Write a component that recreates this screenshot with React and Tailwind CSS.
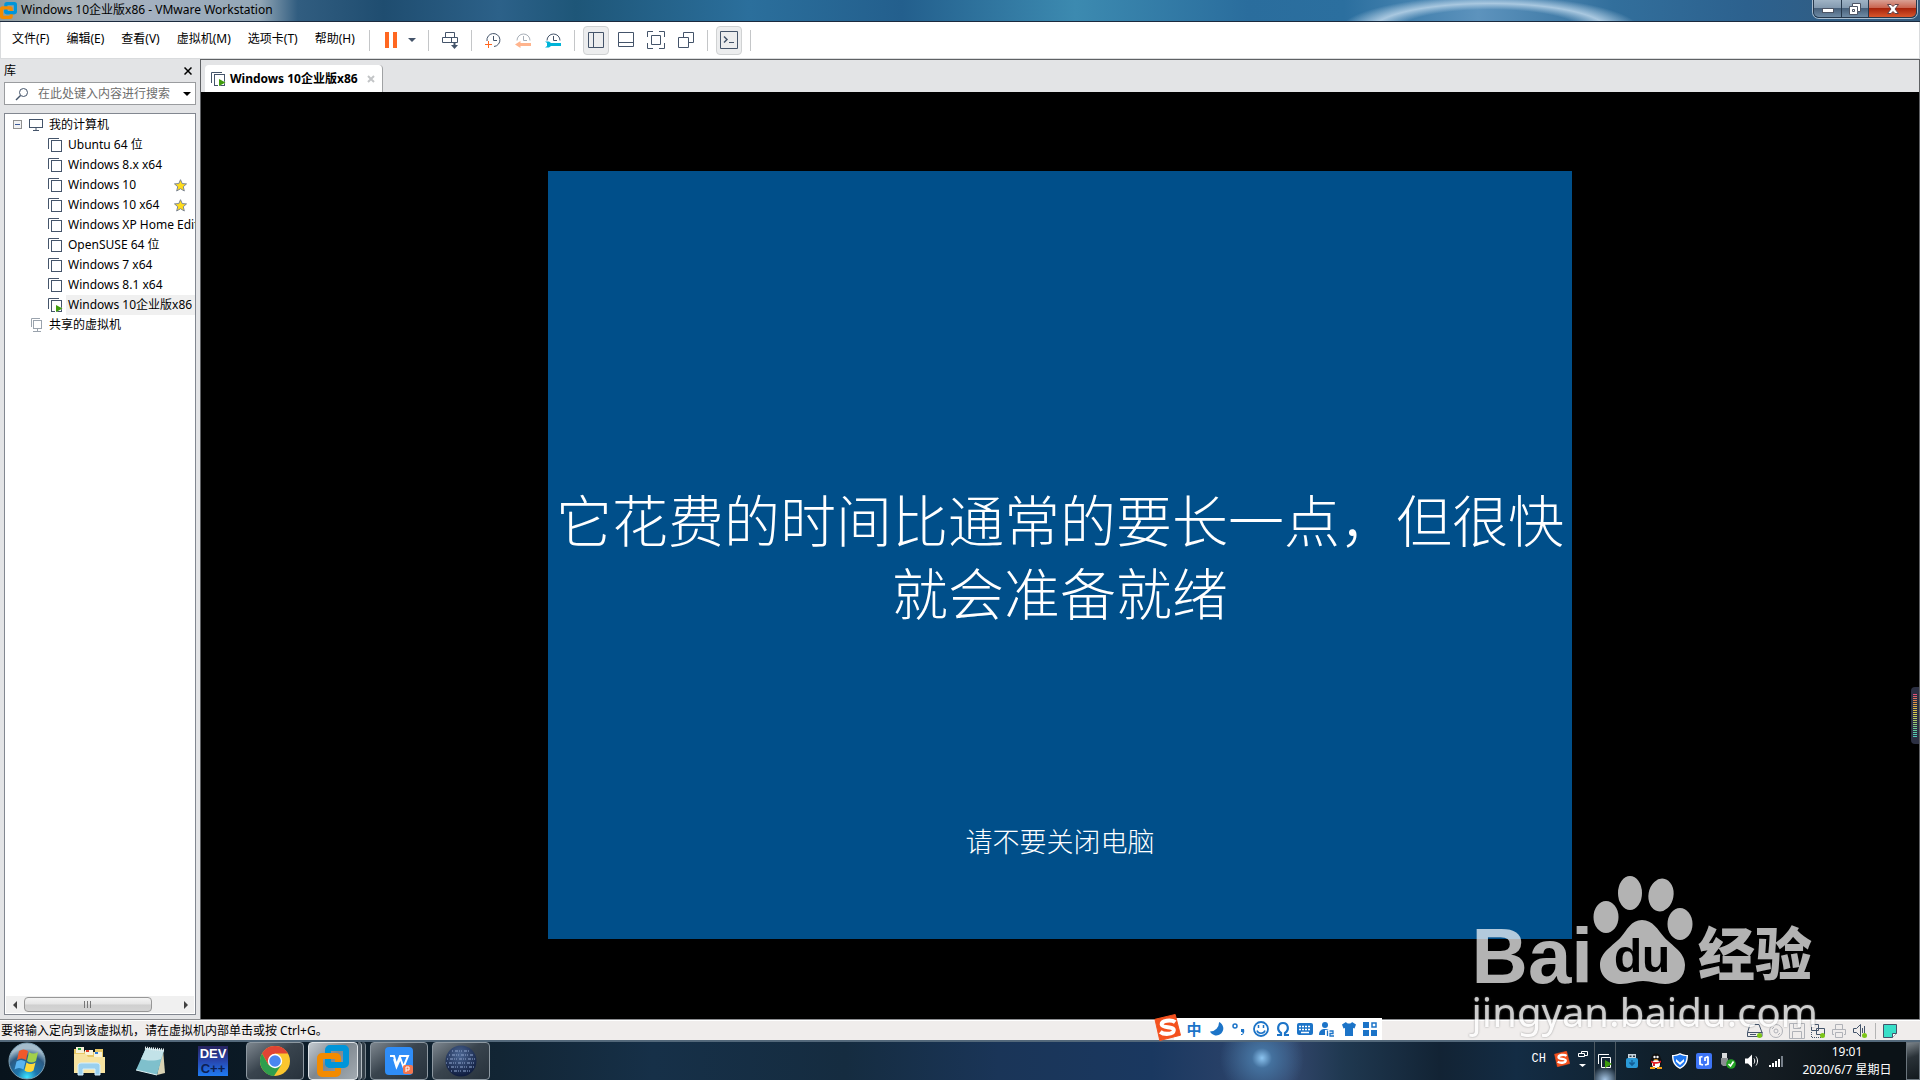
import React from "react";

const INK = "#44546a";

function Svg({ w = 16, h = 16, box, className = "", children }) {
  return (
    <svg
      width={w}
      height={h}
      viewBox={box || `0 0 ${w} ${h}`}
      className={`shrink-0 ${className}`}
      fill="none"
      aria-hidden="true"
    >
      {children}
    </svg>
  );
}

/* ---------- VMware icons ---------- */

function VmwareLogo({ size = 16 }) {
  return (
    <Svg w={size} h={size} box="0 0 32 32">
      <rect x="11" y="3" width="18" height="17" rx="2" stroke="#0095d9" strokeWidth="6" />
      <rect x="3" y="11" width="18" height="18" rx="2" stroke="#f38b00" strokeWidth="6" />
      <path d="M11 15v3a2 2 0 0 0 2 2h14" stroke="#0095d9" strokeWidth="6" />
    </Svg>
  );
}

function VmIcon({ running, color = INK }) {
  return (
    <Svg w={15} h={14}>
      <path d="M.5 11V.5H11" stroke={color} />
      <rect x="3.5" y="2.5" width="10" height="11" stroke={color} />
      {running && <path d="M7 6.500l8 4-8 4z" fill="#fff" />}
      {running && <path d="M8 7v7l6.500-3.500z" fill="#3f9c0c" />}
    </Svg>
  );
}

function MonitorIcon() {
  return (
    <Svg w={14} h={12}>
      <rect x=".5" y=".5" width="13" height="8" stroke={INK} />
      <path d="M7 9v2M4 11.500h6" stroke={INK} />
    </Svg>
  );
}

function SharedIcon() {
  return (
    <Svg w={12} h={14}>
      <path d="M.5 9V.5H9" stroke="#9aa3ad" />
      <rect x="2.500" y="2.500" width="8" height="8" stroke="#9aa3ad" />
      <path d="M6.500 11v2M2 13.500h8" stroke="#9aa3ad" />
    </Svg>
  );
}

function StarIcon() {
  return (
    <Svg w={13} h={13}>
      <path
        d="M6.500 .7l1.700 3.900 4.300.3-3.200 2.800 1 4.300-3.800-2.300L2.700 12l1-4.300L.5 4.900l4.300-.3z"
        fill="#ffdc1c"
        stroke="#7b8494"
      />
    </Svg>
  );
}

function PauseIcon() {
  return (
    <Svg w={12} h={16}>
      <path d="M0 0h4v16H0zM8 0h4v16H8z" fill="#ff6720" />
    </Svg>
  );
}

function SendKeysIcon() {
  return (
    <Svg w={16} h={17}>
      <path d="M3.500 5.500v-5h9v5M.5 5.500h15v5H.5zM9.500 5.500v5" stroke={INK} />
      <path d="M12.500 10v4" stroke={INK} strokeWidth="2" />
      <path d="M9 13h7l-3.500 4z" fill={INK} />
    </Svg>
  );
}

function ClockPlusIcon() {
  return (
    <Svg>
      <path d="M2 9A6.500 6.500 0 1 1 9 14.500" stroke={INK} />
      <path d="M8.500 4v4.500H12" stroke={INK} />
      <path d="M3.500 9v7M0 12.500h7" stroke="#ff6720" />
    </Svg>
  );
}

function ClockBackIcon() {
  return (
    <Svg>
      <path d="M2 8.500a6.500 6.500 0 1 1 13 0" stroke="#a8afb8" />
      <path d="M8.500 4v4.500H12" stroke="#a8afb8" />
      <path d="M0 12.500L5.500 9v2H16v3H5.500v2z" fill="#ffb48d" />
    </Svg>
  );
}

function ClockWrenchIcon() {
  return (
    <Svg>
      <path d="M2 8.500a6.500 6.500 0 1 1 13 0" stroke={INK} />
      <path d="M8.500 4v4.500H12" stroke={INK} />
      <path d="M0 9.500h4l2 1.500h10v3H6l-2 1.500H0L2 14v-3z" fill="#00b4d8" />
    </Svg>
  );
}

function LibraryIcon() {
  return (
    <Svg>
      <path d="M.5.5h15v15H.5zM5.500.5v15" stroke={INK} />
    </Svg>
  );
}

function ThumbBarIcon() {
  return (
    <Svg>
      <path d="M.5.5h15v14H.5zM.5 10.500h15" stroke={INK} />
    </Svg>
  );
}

function FullScreenIcon() {
  return (
    <Svg w={18} h={18}>
      <path d="M.5 6V.5H6M12 .5h5.500V6M17.500 12v5.500H12M6 17.500H.5V12M4.500 4.500h9v9h-9z" stroke={INK} />
    </Svg>
  );
}

function UnityIcon() {
  return (
    <Svg>
      <path d="M5.500 5V.5h10v10H11M.5 5.500h10v10H.5z" stroke={INK} />
    </Svg>
  );
}

function ConsoleIcon() {
  return (
    <Svg w={18} h={18}>
      <path d="M.5.5h17v17H.5z" stroke={INK} />
      <path d="M4 5.500l3 3-3 3" stroke={INK} strokeWidth="1.500" />
      <path d="M9 11.500h5" stroke={INK} />
    </Svg>
  );
}

/* ---------- Title bar ---------- */

function TitleBar() {
  return (
    <header className="flex h-[22px] shrink-0 justify-between overflow-hidden border-b border-[#1b2a3e] bg-[radial-gradient(ellipse_150px_34px_at_1490px_30px,transparent_60%,#a9c8e0_78%,transparent_100%),linear-gradient(90deg,#8e9a9e_0%,#a9b3b9_3%,#a3b0c0_8%,#93a7b6_13.500%,#315d80_15.500%,#1f4d70_20%,#2c6189_26%,#1e5678_30%,#2b6f9c_39%,#235f8d_47%,#3c8ab0_56%,#2a6d9d_65%,#2b6f9f_70%,#5d93bd_77%,#326f9c_84%,#2c618e_91%,#345a7c_100%)]">
      <h1 className="flex h-[20px] items-center gap-1 text-xs font-normal text-black">
        <VmwareLogo size={17} />
        <span>Windows 10企业版x86 - VMware Workstation</span>
      </h1>
      <div className="mr-[3px] flex h-[18px] overflow-hidden rounded-b-md border border-t-0 border-[#26384c] shadow-[0_0_0_1px_#a9bdcf]">
        <button
          aria-label="最小化"
          className="flex w-7 items-center justify-center border-r border-[#26384c] bg-[linear-gradient(#9fb3c5_0%,#8298ae_48%,#48617b_50%,#6f8ba5_100%)]"
        >
          <Svg w={12} h={5} className="mt-1">
            <rect x=".5" y=".5" width="11" height="4" fill="#fff" stroke="#4d5565" />
          </Svg>
        </button>
        <button
          aria-label="还原"
          className="flex w-[27px] items-center justify-center border-r border-[#26384c] bg-[linear-gradient(#9fb3c5_0%,#8298ae_48%,#48617b_50%,#6f8ba5_100%)]"
        >
          <Svg w={12} h={12}>
            <path d="M3.500.5h8v8h-3v3h-8v-8h3z" fill="#fff" stroke="#4d5565" />
            <path d="M3.500 3.500h5v5M3.500 6.500h2v2h-2z" stroke="#4d5565" />
          </Svg>
        </button>
        <button
          aria-label="关闭"
          className="flex w-[47px] items-center justify-center bg-[linear-gradient(#d9a094_0%,#c9614c_48%,#a8240c_50%,#d8562c_100%)]"
        >
          <Svg w={12} h={10}>
            <path d="M.5.5h3.500l2 2 2-2h3.500L8 5l3.500 4.500H8l-2-2-2 2H.5L4 5z" fill="#fff" stroke="#5c4048" />
          </Svg>
        </button>
      </div>
    </header>
  );
}

/* ---------- Menu and toolbar ---------- */

const MENUS = ["文件(F)", "编辑(E)", "查看(V)", "虚拟机(M)", "选项卡(T)", "帮助(H)"];

function Separator() {
  return <span className="mx-2 h-[21px] w-px bg-[#c4c6c8]" />;
}

function ToolButton({ label, active, children }) {
  return (
    <button
      aria-label={label}
      aria-pressed={active ? "true" : undefined}
      className={
        active
          ? "flex h-[29px] w-[26px] items-center justify-center rounded border border-[#d0d2d3] bg-[#ecedee]"
          : "flex h-[29px] w-[26px] items-center justify-center"
      }
    >
      {children}
    </button>
  );
}

function MenuBar() {
  return (
    <div className="flex h-[37px] shrink-0 items-center border-x border-b border-[#d9dbdd] bg-white">
      <nav className="flex w-[360px] items-center gap-px pb-[2px] pl-[3px]">
        {MENUS.map((m) => (
          <button key={m} className="px-2 text-xs whitespace-nowrap text-black">
            {m}
          </button>
        ))}
      </nav>
      <div className="flex items-center">
        <Separator />
        <ToolButton label="挂起">
          <PauseIcon />
        </ToolButton>
        <button aria-label="电源选项" className="flex h-[29px] w-4 items-center justify-center">
          <Svg w={8} h={4}>
            <path d="M0 0h8L4 4z" fill={INK} />
          </Svg>
        </button>
        <Separator />
        <ToolButton label="发送 Ctrl+Alt+Del">
          <SendKeysIcon />
        </ToolButton>
        <Separator />
        <div className="flex gap-1">
          <ToolButton label="拍摄快照">
            <ClockPlusIcon />
          </ToolButton>
          <ToolButton label="恢复快照">
            <ClockBackIcon />
          </ToolButton>
          <ToolButton label="管理快照">
            <ClockWrenchIcon />
          </ToolButton>
        </div>
        <Separator />
        <div className="flex gap-1">
          <ToolButton label="显示库" active>
            <LibraryIcon />
          </ToolButton>
          <ToolButton label="缩略图栏">
            <ThumbBarIcon />
          </ToolButton>
          <ToolButton label="全屏">
            <FullScreenIcon />
          </ToolButton>
          <ToolButton label="Unity">
            <UnityIcon />
          </ToolButton>
        </div>
        <Separator />
        <ToolButton label="控制台视图" active>
          <ConsoleIcon />
        </ToolButton>
        <Separator />
      </div>
    </div>
  );
}

/* ---------- Library panel ---------- */

const MACHINES = [
  { name: "Ubuntu 64 位" },
  { name: "Windows 8.x x64" },
  { name: "Windows 10", star: true },
  { name: "Windows 10 x64", star: true },
  { name: "Windows XP Home Edition" },
  { name: "OpenSUSE 64 位" },
  { name: "Windows 7 x64" },
  { name: "Windows 8.1 x64" },
  { name: "Windows 10企业版x86", running: true },
];

function Library() {
  return (
    <aside className="flex w-[200px] shrink-0 flex-col bg-[#e3e4e6] pr-1 pb-1 pl-1 text-xs text-black">
      <div className="flex h-[23px] items-center justify-between">
        <h2>库</h2>
        <button aria-label="关闭库" className="flex size-4 items-center justify-center">
          <Svg w={8} h={8}>
            <path d="M.5.5l7 7M7.500.5l-7 7" stroke="#000" strokeWidth="1.500" />
          </Svg>
        </button>
      </div>
      <div className="flex h-[23px] items-center border border-[#9a9c9f] bg-white pl-[10px]">
        <Svg w={14} h={14}>
          <circle cx="8.500" cy="5.500" r="4" stroke={INK} />
          <path d="M5.500 8.500L1 13" stroke={INK} strokeWidth="1.500" />
        </Svg>
        <input
          aria-label="搜索"
          placeholder="在此处键入内容进行搜索"
          className="min-w-0 flex-1 bg-transparent pt-px pl-[9px] outline-none placeholder:text-[#6d6d6d]"
        />
        <button aria-label="搜索选项" className="flex h-full w-[17px] items-center justify-center">
          <Svg w={8} h={4}>
            <path d="M0 0h8L4 4z" fill="#000" />
          </Svg>
        </button>
      </div>
      <div className="mt-2 flex min-h-0 flex-1 flex-col border border-[#828790] bg-white">
        <ul className="min-h-0 flex-1 overflow-hidden leading-5 whitespace-nowrap">
          <li>
            <div className="flex h-[21px] items-center pl-2">
              <button
                aria-label="折叠"
                className="flex size-[9px] items-center justify-center border border-[#919191] bg-[#f2f2f2]"
              >
                <span className="h-px w-[5px] bg-[#3b5a9a]" />
              </button>
              <span className="flex items-center gap-[6px] pl-[7px]">
                <MonitorIcon />
                我的计算机
              </span>
            </div>
            <ul>
              {MACHINES.map((m) => (
                <li key={m.name} className="flex h-5 items-center overflow-hidden pl-[43px]">
                  <VmIcon running={m.running} />
                  <button
                    className={
                      m.running
                        ? "ml-[3px] flex-1 overflow-hidden bg-[#f0f0f0] pl-[2px] text-left whitespace-nowrap"
                        : "ml-[5px] flex-1 overflow-hidden text-left whitespace-nowrap"
                    }
                  >
                    {m.name}
                  </button>
                  {m.star && (
                    <span className="pr-2">
                      <StarIcon />
                    </span>
                  )}
                </li>
              ))}
            </ul>
          </li>
          <li className="flex h-5 items-center gap-[6px] pl-[26px]">
            <SharedIcon />
            共享的虚拟机
          </li>
        </ul>
        <div className="m-px flex h-[17px] items-center bg-[#f0f0f0]">
          <button aria-label="向左滚动" className="flex h-full w-[18px] items-center justify-center">
            <Svg w={4} h={8}>
              <path d="M4 0v8L0 4z" fill="#404040" />
            </Svg>
          </button>
          <div className="flex h-[15px] flex-1">
            <div className="flex w-5/6 items-center justify-center gap-px rounded-sm border border-[#979797] bg-[linear-gradient(#f4f4f4_0%,#e4e4e4_48%,#cfcfcf_52%,#d4d4d4_100%)]">
              <span className="h-[7px] w-[2px] border-l border-[#777]" />
              <span className="h-[7px] w-[2px] border-l border-[#777]" />
              <span className="h-[7px] w-[2px] border-l border-[#777]" />
            </div>
          </div>
          <button aria-label="向右滚动" className="flex h-full w-[17px] items-center justify-center">
            <Svg w={4} h={8}>
              <path d="M0 0v8l4-4z" fill="#404040" />
            </Svg>
          </button>
        </div>
      </div>
    </aside>
  );
}

/* ---------- Guest view ---------- */

function LevelMeter() {
  const colors = [
    "#e0507a", "#e0606a", "#e0705a", "#e0804e", "#e09048", "#e0a044", "#e0ac44", "#e0b844",
    "#dcc048", "#d8c84c", "#d0cc50", "#c4cc58", "#b8cc60", "#acca68", "#9cca70", "#8cca78",
    "#7cca84", "#6cca90", "#60ca9c", "#58caa8", "#54cab0", "#50cab8",
  ];
  return (
    <div className="absolute top-[628px] right-0 flex w-[8px] flex-col items-center gap-px rounded-l bg-[#2b2f42] py-[7px]">
      {colors.map((c) => (
        <span key={c} className="h-px w-1" style={{ backgroundColor: c }} />
      ))}
    </div>
  );
}

function Workspace() {
  return (
    <main className="relative flex min-w-0 flex-1 flex-col border-r border-l border-[#5f6164] bg-black">
      <div className="flex h-[33px] shrink-0 items-end border-t border-[#5f6164] bg-[#e3e4e6] pl-1">
        <div className="flex h-[27px] items-center rounded-t border-r border-[#a0a2a4] bg-white pr-[7px] pl-[6px] text-xs font-bold text-black">
          <VmIcon running />
          <span className="pl-1">Windows 10企业版x86</span>
          <button aria-label="关闭选项卡" className="ml-[9px] flex size-2 items-center justify-center">
            <Svg w={8} h={8}>
              <path d="M1 1l6 6M7 1L1 7" stroke="#c3c5c7" strokeWidth="2" />
            </Svg>
          </button>
        </div>
      </div>
      <div className="flex min-h-0 flex-1 items-center justify-center pb-[2px]">
        <section className="flex h-[768px] w-[1024px] flex-col items-center bg-[#004f8a] text-white">
          <p className="mt-[313px] px-2 text-center text-[56px] leading-[73px] font-light">
            它花费的时间比通常的要长一点，但很快就会准备就绪
          </p>
          <p className="mt-[194px] text-[27px] leading-9 font-light">请不要关闭电脑</p>
        </section>
      </div>
      <LevelMeter />
    </main>
  );
}

/* ---------- Status bar ---------- */

function Dot({ x, y }) {
  return <circle cx={x} cy={y} r="2.500" fill="#7cc518" />;
}

function StatusBar() {
  return (
    <footer className="flex h-5 shrink-0 items-center justify-between border-t border-white bg-[#f0edec] pr-[23px] text-xs text-black">
      <span className="pt-px pl-px">要将输入定向到该虚拟机，请在虚拟机内部单击或按 Ctrl+G。</span>
      <div className="flex items-center gap-[5px]">
        <Svg>
          <path d="M3 1.500h9l3 8v4H.5v-4zM.5 9.500h15M3 11.500h6" stroke={INK} />
          <Dot x={12.5} y={12.5} />
        </Svg>
        <Svg>
          <circle cx="8" cy="8" r="6.500" stroke="#b0b2b8" />
          <circle cx="8" cy="8" r="2" stroke="#b0b2b8" />
          <path d="M4 6l2-2M10 12l2-2" stroke="#b0b2b8" />
        </Svg>
        <Svg>
          <path d="M.5.5h15v15H.5zM4.500.5v5h7v-5M3.500 15V8.500h9V15" stroke="#b0b2b8" />
        </Svg>
        <Svg>
          <path d="M1.500 1.500h7v6h-7zM6.500 5.500h8v6h-8z" fill="#f0edec" stroke={INK} />
          <path d="M1.500 9v5.500H11" stroke={INK} strokeDasharray="1 1" />
          <Dot x={12.5} y={12.5} />
        </Svg>
        <Svg>
          <path d="M4.500 6V1.500h7V6M3 11.500H1.500v-5h13v5H13M4.500 9.500h7v5h-7z" stroke="#b0b2b8" />
        </Svg>
        <Svg>
          <path d="M1.500 5.500h3l4-4v12l-4-4h-3zM10.500 5v5M12.500 3v7" stroke={INK} />
          <Dot x={12.5} y={12.5} />
        </Svg>
        <span className="mx-[2px] h-4 w-px bg-[#b4b4b4]" />
        <Svg w={14} h={14}>
          <path d="M.5.5h13v9l-4 4h-9z" fill="#38dfc8" stroke={INK} />
          <path d="M9.500 13.500v-4h4" fill="#fff" stroke={INK} />
        </Svg>
      </div>
    </footer>
  );
}

/* ---------- Input method bar ---------- */

function SogouMark({ size }) {
  return (
    <Svg w={size} h={size} box="0 0 28 28">
      <path d="M1 5.500L22 .5 27.500 22 6 27.500z" fill="#f4511e" stroke="#f4511e" strokeLinejoin="round" />
      <path
        d="M22 8.500C18 5.500 7.500 6.500 8 11c.5 4 13 1.500 12.500 6C20 21.500 10 21.500 6.500 18.500"
        stroke="#fff"
        strokeWidth="4.200"
      />
    </Svg>
  );
}

function InputBar() {
  const blue = "#1c74c8";
  return (
    <div className="absolute right-[538px] bottom-10 flex h-[22px] items-center gap-[6px] bg-white pr-[5px]">
      <div className="-mt-1 -mr-[2px] -ml-5">
        <SogouMark size={27} />
      </div>
      <button className="w-[18px] text-[15px] leading-5 font-bold text-[#1c74c8]">中</button>
      <Svg>
        <path d="M10 1a7 7 0 1 1-9 9.500A9 9 0 0 0 10 1z" fill={blue} />
      </Svg>
      <Svg>
        <circle cx="4" cy="5" r="2" stroke={blue} strokeWidth="1.500" />
        <path d="M10 13c3 0 2-2 0-2V8h3c1 4-1 6-3 6z" fill={blue} />
      </Svg>
      <Svg>
        <circle cx="8" cy="8" r="7" stroke={blue} strokeWidth="1.800" />
        <path d="M5.500 4v3M10.500 4v3M4 9.500c1 3.500 7 3.500 8 0" stroke={blue} strokeWidth="1.500" />
      </Svg>
      <Svg>
        <path d="M2 14h4v-2C1.500 9 2.500 2 8 2s6.500 7 2 10v2h4" stroke={blue} strokeWidth="2.200" />
      </Svg>
      <Svg>
        <rect y="2" width="16" height="12" rx="2" fill={blue} />
        <path d="M2 5.500h12M2 8.500h12" stroke="#fff" strokeWidth="1.500" strokeDasharray="2 1" />
        <path d="M4 11.500h8" stroke="#fff" strokeWidth="1.500" />
      </Svg>
      <Svg>
        <circle cx="6" cy="4" r="3" fill={blue} />
        <path d="M0 14c0-5 3-6 6-6s5 1 6 4v2z" fill={blue} />
        <rect x="6" y="9" width="10" height="7" fill="#fff" />
        <path d="M8.500 9.500V15M10.500 10H14v2.500h-3v2.500h4" stroke={blue} strokeWidth="1.300" />
      </Svg>
      <Svg>
        <path d="M5 1c1 2 5 2 6 0l4 2.500-1.500 4-1.500-.5v8H4V7l-1.500.5L1 3.500z" fill={blue} />
      </Svg>
      <Svg w={14} h={14}>
        <path d="M0 0h6v6H0zM0 8h6v6H0zM8 8h6v6H8z" fill={blue} />
        <rect x="9" y="1" width="4" height="4" stroke={blue} strokeWidth="1.500" />
      </Svg>
    </div>
  );
}

/* ---------- Taskbar ---------- */

function StartOrb() {
  return (
    <Svg w={38} h={38}>
      <defs>
        <radialGradient id="orb" cx="50%" cy="95%" r="80%">
          <stop offset="0" stopColor="#3ee6ff" />
          <stop offset=".35" stopColor="#1d76ae" />
          <stop offset=".75" stopColor="#2c5a82" />
          <stop offset="1" stopColor="#a4bccc" />
        </radialGradient>
      </defs>
      <circle cx="19" cy="19" r="18" fill="url(#orb)" stroke="#7da0b4" />
      <path d="M11 9c3-2 6-2 9 0l-2 9c-3-2-6-2-9 0z" fill="#f0592a" />
      <path d="M21 10c3 2 6 2 9 0l-2 9c-3 2-6 2-9 0z" fill="#a2d04a" />
      <path d="M8.500 19.500c3-2 6-2 9 0l-2 8c-3-2-6-2-9 0z" fill="#5ab4f0" />
      <path d="M18.500 20.500c3 2 6 2 9 0l-2 8c-3 2-6 2-9 0z" fill="#ffd83a" />
    </Svg>
  );
}

function ExplorerIcon() {
  return (
    <Svg w={32} h={30}>
      <path d="M1 3h9l2 3h10V3h8v24H1z" fill="#e8c766" />
      <path d="M3 1h8v6H3z" fill="#f8f2d8" />
      <path d="M5 2h3v2H5z" fill="#25a33a" />
      <path d="M12 4h8v5h-8z" fill="#f8f2d8" />
      <path d="M13 4h3v2h-3z" fill="#e03a20" />
      <path d="M21 6h8v5h-8z" fill="#f8f2d8" />
      <path d="M22 6h3v2h-3z" fill="#2a7ad8" />
      <path d="M1 8h12l2 3h17v16H1z" fill="#f7e3a0" />
      <path d="M5 29V19a3 3 0 0 1 3-2h16a3 3 0 0 1 3 2v10h-5v-6H10v6z" fill="#9ad0ee" stroke="#d8f0fc" />
    </Svg>
  );
}

function NotepadIcon() {
  return (
    <Svg w={32} h={30}>
      <path d="M28 3l2 24-8 2z" fill="#d9d3b4" />
      <path d="M11 2l18 2-7 25L1 24z" fill="#7fc0cc" />
      <path d="M11 2l18 2-3 9C18 16 9 14 6 13z" fill="#c2e2e8" />
      <path d="M10 2l19 2" stroke="#e8eef0" strokeWidth="3" strokeDasharray="1 1" />
      <path d="M1 24l21 5" stroke="#dff2f5" />
    </Svg>
  );
}

function DevIcon() {
  return (
    <span className="flex h-[30px] w-[30px] flex-col items-center justify-between overflow-hidden bg-[linear-gradient(#27235e,#2746ae_50%,#1f7cf4)] font-['Liberation_Sans'] text-[13px] leading-[15px] font-bold">
      <span className="text-white">DEV</span>
      <span className="text-[#0d1f52]">C++</span>
    </span>
  );
}

function ChromeIcon() {
  return (
    <Svg w={30} h={30}>
      <circle cx="15" cy="15" r="15" fill="#fbc62e" />
      <path d="M2 7.500A15 15 0 0 1 28 7.500H15L8.500 19z" fill="#e04434" />
      <path d="M2 7.500A15 15 0 0 0 14 30l7.500-11.500L8.500 19z" fill="#2f9e4d" />
      <circle cx="15" cy="15" r="7.200" fill="#fff" />
      <circle cx="15" cy="15" r="5.800" fill="#4a86f0" />
    </Svg>
  );
}

function WpsIcon() {
  return (
    <Svg w={28} h={28}>
      <rect width="28" height="28" rx="4" fill="#2f8df7" />
      <path d="M5 9h4l2.500 9L15 9h8l-4.500 11-4-11M9 12l2.500 8L15 12" stroke="#fff" strokeWidth="2" />
      <rect x="18" y="18" width="10" height="9" rx="2" fill="#f4764e" />
      <path d="M21 25v-5h3v3h-3" stroke="#fff" />
    </Svg>
  );
}

function GlobeIcon() {
  return (
    <Svg w={32} h={32}>
      <defs>
        <radialGradient id="globe" cx="45%" cy="30%" r="70%">
          <stop offset="0" stopColor="#4c6794" />
          <stop offset="1" stopColor="#0f1c3e" />
        </radialGradient>
      </defs>
      <circle cx="16" cy="16" r="15.500" fill="url(#globe)" />
      <path
        d="M7 6h18M4 10h24M2 14h28M1 18h29M3 22h26M6 26h20"
        stroke="#8298c0"
        strokeWidth="2"
        strokeDasharray="1 2 3 1 1 1"
        opacity=".6"
      />
    </Svg>
  );
}

function TaskButton({ label, front, children }) {
  return (
    <button
      aria-label={label}
      className={
        front
          ? "flex h-[38px] w-[50px] items-center justify-center rounded-sm border border-[#dfe4e8] bg-[linear-gradient(135deg,#c3c9cf,#7e878f_45%,#a3abb2)]"
          : "flex h-[38px] w-[58px] items-center justify-center rounded-sm border border-[#8d98a1] bg-[linear-gradient(145deg,#7d868e,#39444e_45%,#27323c)]"
      }
    >
      {children}
    </button>
  );
}

function TrayIcons() {
  return (
    <div className="flex items-center gap-2">
      <div className="flex h-[38px] w-[22px] items-center justify-center border-x border-[#4d5962] bg-[radial-gradient(circle_at_50%_100%,#a8c8e8_0%,#1a2a38_35%,transparent_60%)]">
        <Svg w={16} h={16}>
          <path d="M1.500 11V1.500H12M4.500 14.500v-10h9v10z" stroke="#fff" />
          <path d="M8 7v8l7-4z" fill="#3f9c0c" />
        </Svg>
      </div>
      <Svg>
        <path d="M4 1h8v5H4z" fill="#c8d4dc" />
        <rect x="2" y="5" width="12" height="10" rx="2" fill="#2a9ad8" />
        <path d="M8 7v6M6 9v2h4V9" stroke="#0d4a80" />
        <path d="M5.500 2.500h2v1.500h-2zM9 2.500h2v1.500H9z" fill="#2c3844" />
      </Svg>
      <Svg>
        <ellipse cx="8" cy="9" rx="6" ry="6" fill="#111" />
        <ellipse cx="8" cy="5" rx="4.500" ry="4.500" fill="#111" />
        <ellipse cx="8" cy="11" rx="4" ry="4" fill="#fff" />
        <circle cx="6.500" cy="4" r="1.200" fill="#fff" />
        <circle cx="9.500" cy="4" r="1.200" fill="#fff" />
        <path d="M5.500 6.200h5L8 7.500zM2 14h5v2H2zM9 14h5v2H9z" fill="#f6a318" />
        <path d="M3 7.500c3 2 7 2 10 0v2c-2 1-4 1.200-6 1.200V13H5v-2.500l-2-1z" fill="#e0202a" />
      </Svg>
      <Svg>
        <path d="M8 0c3 1.500 5 2 8 2 0 7-2 11-8 14C2 13 0 9 0 2c3 0 5-.5 8-2z" fill="#fff" />
        <path d="M8 1.500c2.500 1 4.500 1.500 6.500 1.500 0 6-2 9-6.500 11.500C3.500 12 1.500 9 1.500 3c2 0 4-.5 6.500-1.500z" fill="#1f77f0" />
        <path d="M4 6l4 3.500L12 6v2.500L8 12 4 8.500z" fill="#fff" />
      </Svg>
      <Svg>
        <rect width="16" height="16" rx="2" fill="#3d74f5" />
        <path d="M4 3.500V11l3 1M3 4.500l3.500-1M12 3.500V11l-3 1M9 8V5l3-1.500" stroke="#fff" strokeWidth="1.800" />
      </Svg>
      <Svg>
        <path d="M2 0h5v5H2z" fill="#d8dadc" />
        <path d="M1 5h7v6l-2 2H3l-2-2z" fill="#8b8f92" />
        <circle cx="11" cy="11" r="4.800" fill="#23a323" />
        <path d="M8.500 11l2 2 3-4.500" stroke="#fff" strokeWidth="1.600" />
      </Svg>
      <Svg>
        <path d="M1 5.500h3l4-4v13l-4-4H1z" fill="#fff" />
        <path d="M10 5.500c1 1.500 1 3.500 0 5M12 3.500c2 3 2 6 0 9" stroke="#fff" />
      </Svg>
      <Svg>
        <path d="M1 12h2v2H1zM4 10h2v4H4zM7 8h2v6H7zM10 6h2v8h-2z" fill="#fff" />
        <path d="M13 3h2v11h-2z" fill="#77808a" />
      </Svg>
    </div>
  );
}

function Taskbar() {
  return (
    <footer className="flex h-10 shrink-0 items-center justify-between border-t-2 border-[#53687a] bg-[radial-gradient(circle_at_1262px_16px,#8cc4f0_0px,#44719e_10px,transparent_42px),linear-gradient(90deg,#08131c_0%,#0b1a26_14%,#122534_26%,#163048_34%,#152c40_44%,#1a3558_52%,#1a3860_60%,#33476d_67%,#1f3850_70%,#122334_75%,#132c44_79%,#10202c_86%,#151d23_92%,#0b1217_97%)]">
      <div className="flex items-center">
        <button aria-label="开始" className="ml-2">
          <StartOrb />
        </button>
        <button aria-label="资源管理器" className="ml-[27px]">
          <ExplorerIcon />
        </button>
        <button aria-label="记事本" className="ml-[30px]">
          <NotepadIcon />
        </button>
        <button aria-label="Dev-C++" className="ml-[31px]">
          <DevIcon />
        </button>
        <div className="ml-[18px] flex gap-1">
          <TaskButton label="Chrome">
            <ChromeIcon />
          </TaskButton>
          <div className="flex">
            <TaskButton label="VMware Workstation" front>
              <VmwareLogo size={32} />
            </TaskButton>
            <span className="h-[38px] w-1 rounded-r-sm border-r border-[#b4bcc2] bg-[#56616b]" />
            <span className="h-[38px] w-1 rounded-r-sm border-r border-[#7e8a93] bg-[#323e48]" />
          </div>
          <TaskButton label="WPS">
            <WpsIcon />
          </TaskButton>
          <TaskButton label="网络">
            <GlobeIcon />
          </TaskButton>
        </div>
      </div>
      <div className="flex h-full items-center text-white">
        <div className="mr-[6px] flex items-center gap-2 pb-1">
          <span className="font-['Liberation_Mono'] text-xs">CH</span>
          <SogouMark size={16} />
          <Svg w={10} h={17}>
            <path d="M3.500 3V.5h6v4H7M.5 2.500h6v3h-6z" stroke="#fff" />
            <path d="M1 13h7l-3.500 3z" fill="#fff" />
          </Svg>
        </div>
        <TrayIcons />
        <div className="flex w-[122px] flex-col items-center pl-1 text-xs leading-[18px] whitespace-nowrap">
          <time>19:01</time>
          <time>2020/6/7 星期日</time>
        </div>
        <button
          aria-label="显示桌面"
          className="h-[38px] w-[14px] border border-[#6b757d] bg-[linear-gradient(160deg,#7c848a,#2a3238_40%,#12191e)]"
        />
      </div>
    </footer>
  );
}

/* ---------- Baidu Jingyan mark ---------- */

function BaiduMark() {
  return (
    <div className="pointer-events-none absolute right-[102px] bottom-[46px] flex flex-col text-white">
      <div className="flex items-end opacity-70">
        <span className="font-['Liberation_Sans'] text-[78px] leading-[80px] font-bold">Bai</span>
        <Svg w={101} h={108} className="mb-3">
          <defs>
            <mask id="du">
              <rect width="101" height="108" fill="#fff" />
              <text
                x="49"
                y="96"
                textAnchor="middle"
                fontFamily="Liberation Sans"
                fontSize="46"
                fontWeight="700"
                fill="#000"
              >
                du
              </text>
            </mask>
          </defs>
          <ellipse cx="13" cy="41" rx="12.500" ry="16" fill="#fff" />
          <ellipse cx="37" cy="17" rx="12" ry="17" fill="#fff" />
          <ellipse cx="68" cy="19" rx="12.500" ry="16.500" fill="#fff" transform="rotate(10 68 19)" />
          <ellipse cx="87" cy="48" rx="12.500" ry="16" fill="#fff" />
          <path
            mask="url(#du)"
            d="M49 44c11 0 16 10 22 17 8 9 21 15 21 28 0 13-9 19-20 19-9 0-13-3-22-3s-13 3-22 3c-11 0-21-7-21-19 0-13 13-19 21-28 6-7 10-17 21-17z"
            fill="#fff"
          />
        </Svg>
        <span className="pl-1 text-[57px] leading-[86px] font-black">经验</span>
      </div>
      <span className="-mt-[6px] text-[40px] leading-[44px] opacity-80 [text-shadow:0_0_2px_#777]">
        jingyan.baidu.com
      </span>
    </div>
  );
}

export default function App() {
  return (
    <div className="relative flex h-screen flex-col overflow-hidden bg-[#e3e4e6] font-['Noto_Sans','Noto_Sans_CJK_SC',sans-serif]">
      <TitleBar />
      <MenuBar />
      <div className="flex min-h-0 flex-1 border-b border-[#8b8d90]">
        <Library />
        <Workspace />
      </div>
      <StatusBar />
      <Taskbar />
      <InputBar />
      <BaiduMark />
    </div>
  );
}
